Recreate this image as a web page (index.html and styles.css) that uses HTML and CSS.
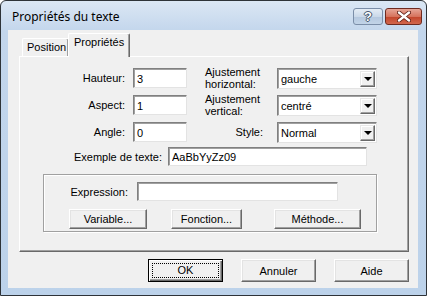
FILE: index.html
```html
<!DOCTYPE html>
<html lang="fr">
<head>
    <meta charset="UTF-8">
    <title>Propriétés du texte</title>
    <link rel="stylesheet" href="styles.css">
</head>
<body>
    <div class="window">
        <div class="titlebar">
            <span class="title">Propriétés du texte</span>
            <div class="caption-btns">
                <span class="cbtn help">?</span>
                <span class="cbtn close">
                    <svg width="14" height="11" viewBox="0 0 14 11">
                        <path d="M2 1.5 L12 9.5 M12 1.5 L2 9.5" stroke="#5a1a10" stroke-width="4" stroke-linecap="round"/>
                        <path d="M2 1.5 L12 9.5 M12 1.5 L2 9.5" stroke="#fff" stroke-width="2.4" stroke-linecap="round"/>
                    </svg>
                </span>
            </div>
        </div>

        <div class="client">
            <div class="tabs">
                <div class="tab">Position</div>
                <div class="tab active">Propriétés</div>
            </div>

            <div class="panel">
                <div class="fields">
                    <label class="lbl">Hauteur:</label>
                    <div class="cell"><input class="edit small" type="text" value="3"></div>
                    <label class="lbl2">Ajustement<br>horizontal:</label>
                    <div class="combo"><span>gauche</span><i class="drop"></i></div>

                    <label class="lbl">Aspect:</label>
                    <div class="cell"><input class="edit small" type="text" value="1"></div>
                    <label class="lbl2">Ajustement<br>vertical:</label>
                    <div class="combo"><span>centré</span><i class="drop"></i></div>

                    <label class="lbl">Angle:</label>
                    <div class="cell"><input class="edit small" type="text" value="0"></div>
                    <label class="lbl2 right">Style:</label>
                    <div class="combo"><span>Normal</span><i class="drop"></i></div>
                </div>

                <div class="sample-row">
                    <label class="sample-lbl">Exemple de texte:</label>
                    <input class="edit sample" type="text" value="AaBbYyZz09">
                </div>

                <div class="group">
                    <div class="expr-row">
                        <label class="expr-lbl">Expression:</label>
                        <input class="edit expr" type="text" value="">
                    </div>
                    <div class="group-btns">
                        <button class="btn b-var">Variable...</button>
                        <button class="btn b-fn">Fonction...</button>
                        <button class="btn b-meth">Méthode...</button>
                    </div>
                </div>
            </div>

            <div class="footer">
                <button class="btn big default"><span class="focus">OK</span></button>
                <button class="btn big">Annuler</button>
                <button class="btn big">Aide</button>
            </div>
        </div>
    </div>
</body>
</html>
```

FILE: styles.css
```css
* {
    box-sizing: border-box;
}
body {
    margin: 0;
    background: #fff;
    font-family: "Liberation Sans", Arial, sans-serif;
    font-size: 11px;
    color: #000;
}
.window {
    width: 427px;
    height: 296px;
    border: 1px solid #2e3338;
    border-radius: 6px 6px 0 0;
    background: linear-gradient(#dbe7f4 0px, #c3d6ec 30px, #bcd2ea 100%);
    padding: 0 8px 7px 7px;
    display: flex;
    flex-direction: column;
}
.titlebar {
    height: 29px;
    display: flex;
    align-items: center;
    justify-content: space-between;
}
.title {
    font-family: "Noto Sans", "Liberation Sans", sans-serif;
    font-size: 12px;
    padding-left: 4px;
    padding-top: 2px;
}
.caption-btns {
    display: flex;
    gap: 2px;
    margin-right: -4px;
    margin-top: 1px;
}
.cbtn {
    height: 17px;
    border-radius: 3px;
    display: flex;
    align-items: center;
    justify-content: center;
}
.help {
    width: 30px;
    border: 1px solid #7b8ea8;
    background: linear-gradient(#e4ecf5 0%, #cbd9e9 50%, #b4c7de 51%, #c2d4e8 100%);
    color: #fff;
    font-family: "Liberation Sans", sans-serif;
    font-weight: bold;
    font-size: 13px;
    text-shadow: 0 0 1px #2c3a4e, 1px 0 0 #4c5d75, -1px 0 0 #4c5d75, 0 1px 0 #4c5d75, 0 -1px 0 #4c5d75;
}
.close {
    width: 37px;
    border: 1px solid #6e2a1f;
    background: linear-gradient(#e6a596 0%, #d6735d 50%, #c2442a 51%, #d2674d 100%);
}
.client {
    flex: 1;
    background: #f0f0f0;
    padding: 3px 0 0 11px;
}
.tabs {
    display: flex;
    align-items: flex-end;
    height: 23px;
    padding-left: 3px;
}
.tab {
    height: 18px;
    padding: 2px 5px 0 4px;
    border-top: 1px solid #fff;
    border-left: 1px solid #fff;
    border-right: 1px solid #696969;
    box-shadow: inset -1px 0 0 #a0a0a0;
    border-radius: 2px 2px 0 0;
    width: 47px;
}
.tab.active {
    position: relative;
    z-index: 1;
    width: 62px;
    height: 24px;
    margin-left: -1px;
    margin-bottom: -1px;
    padding: 2px 4px 0 5px;
    background: #f0f0f0;
}
.panel {
    width: 390px;
    height: 196px;
    border: 1px solid;
    border-color: #fff #696969 #696969 #fff;
    box-shadow: inset -1px -1px 0 #a0a0a0;
    padding-top: 11px;
}
.fields {
    display: grid;
    grid-template-columns: 113px 72px 72px 100px;
    grid-auto-rows: 20px;
    row-gap: 7px;
}
.lbl {
    text-align: right;
    padding-right: 8px;
    align-self: center;
}
.lbl2 {
    line-height: 12px;
    align-self: center;
}
.lbl2.right {
    text-align: right;
    padding-right: 14px;
}
.edit {
    font-family: "Liberation Sans", Arial, sans-serif;
    font-size: 11px;
    color: #000;
    background: #fff;
    height: 20px;
    padding: 1px 3px 0;
    margin: 0;
    border: 1px solid;
    border-color: #808080 #e3e3e3 #e3e3e3 #808080;
    box-shadow: inset 1px 1px 0 #a0a0a0, inset -1px -1px 0 #fff;
    outline: none;
}
.small {
    width: 54px;
}
.combo {
    width: 100px;
    height: 21px;
    background: #fff;
    border: 1px solid;
    border-color: #808080 #e3e3e3 #e3e3e3 #808080;
    box-shadow: inset 1px 1px 0 #a0a0a0;
    display: flex;
    align-items: center;
    justify-content: space-between;
    padding: 1px 1px 1px 3px;
}
.drop {
    width: 15px;
    height: 16px;
    background: #f0f0f0;
    border: 1px solid;
    border-color: #e8e8e8 #696969 #696969 #e8e8e8;
    box-shadow: inset -1px -1px 0 #a0a0a0, inset 1px 1px 0 #fff;
    display: flex;
    align-items: center;
    justify-content: center;
}
.drop::after {
    content: "";
    border-left: 4px solid transparent;
    border-right: 4px solid transparent;
    border-top: 4px solid #000;
    margin-top: 1px;
}
.sample-row {
    display: flex;
    align-items: center;
    margin-top: 5px;
}
.sample-lbl {
    width: 148px;
    text-align: right;
    padding-right: 6px;
}
.sample {
    width: 199px;
    height: 19px;
}
.group {
    width: 334px;
    height: 58px;
    margin: 8px 0 0 23px;
    border: 1px solid #a0a0a0;
    box-shadow: inset 1px 1px 0 #fff, 1px 1px 0 #fff;
    padding-top: 7px;
}
.expr-row {
    display: flex;
    align-items: center;
}
.expr-lbl {
    width: 93px;
    text-align: right;
    padding-right: 9px;
}
.expr {
    width: 201px;
    height: 19px;
}
.group-btns {
    display: flex;
    margin-top: 8px;
    padding-left: 25px;
}
.btn {
    font-family: "Liberation Sans", Arial, sans-serif;
    font-size: 11px;
    color: #000;
    background: #f0f0f0;
    height: 20px;
    padding: 0;
    border: 1px solid;
    border-color: #fff #696969 #696969 #fff;
    box-shadow: inset -1px -1px 0 #a0a0a0, inset 1px 1px 0 #e3e3e3;
}
.b-var {
    width: 78px;
}
.b-fn {
    width: 71px;
    margin-left: 24px;
}
.b-meth {
    width: 87px;
    margin-left: 32px;
}
.footer {
    display: flex;
    justify-content: flex-end;
    gap: 18px;
    margin-top: 7px;
    padding-right: 9px;
}
.big {
    width: 75px;
    height: 23px;
}
.btn.default {
    border: 1px solid #000;
    box-shadow: inset 1px 1px 0 #fff, inset -1px -1px 0 #696969, inset -2px -2px 0 #a0a0a0;
    padding: 3px;
}
.focus {
    display: block;
    height: 100%;
    border: 1px dotted #000;
    line-height: 13px;
}
```
